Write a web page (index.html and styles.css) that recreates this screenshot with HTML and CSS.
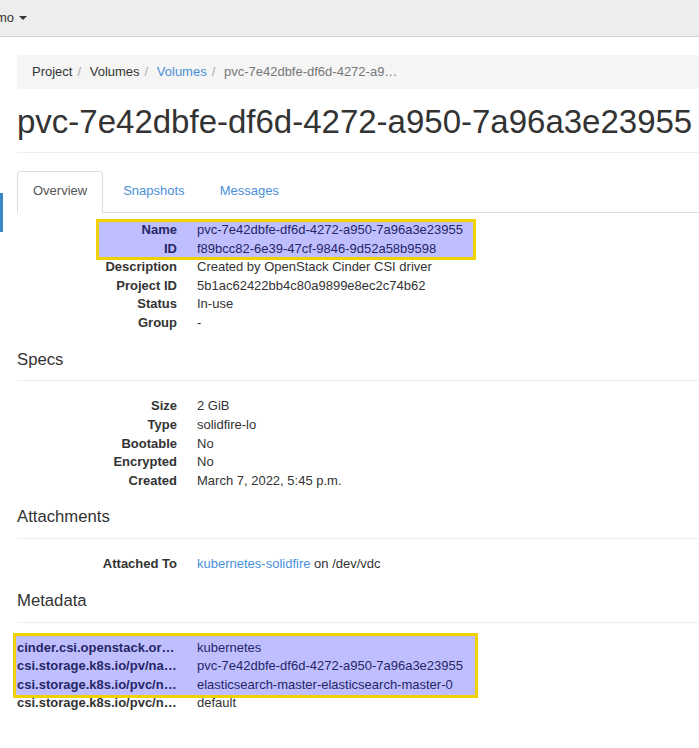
FILE: index.html
```html
<!DOCTYPE html>
<html lang="en">
<head>
<meta charset="utf-8">
<title>Volume Details</title>
<link rel="stylesheet" href="styles.css">
</head>
<body>
<header class="topbar">
  <span class="project">mo<span class="caret"></span></span>
</header>
<div class="layout">
  <aside class="sidebar"><span class="active-mark"></span></aside>
  <main class="main">
    <ol class="breadcrumb">
      <li>Project</li>
      <li>Volumes</li>
      <li><a href="#">Volumes</a></li>
      <li class="active">pvc-7e42dbfe-df6d-4272-a9…</li>
    </ol>
    <div class="page-header">
      <h1>pvc-7e42dbfe-df6d-4272-a950-7a96a3e23955</h1>
    </div>
    <ul class="nav-tabs">
      <li class="active"><a href="#">Overview</a></li>
      <li><a href="#">Snapshots</a></li>
      <li><a href="#">Messages</a></li>
    </ul>
    <div class="tab-content">
      <dl class="dl-horizontal overview">
        <dt>Name</dt><dd>pvc-7e42dbfe-df6d-4272-a950-7a96a3e23955</dd>
        <dt>ID</dt><dd>f89bcc82-6e39-47cf-9846-9d52a58b9598</dd>
        <dt>Description</dt><dd>Created by OpenStack Cinder CSI driver</dd>
        <dt>Project ID</dt><dd>5b1ac62422bb4c80a9899e8ec2c74b62</dd>
        <dt>Status</dt><dd>In-use</dd>
        <dt>Group</dt><dd>-</dd>
        <div class="hl hl-overview"></div>
      </dl>

      <h4>Specs</h4>
      <hr>
      <dl class="dl-horizontal">
        <dt>Size</dt><dd>2 GiB</dd>
        <dt>Type</dt><dd>solidfire-lo</dd>
        <dt>Bootable</dt><dd>No</dd>
        <dt>Encrypted</dt><dd>No</dd>
        <dt>Created</dt><dd>March 7, 2022, 5:45 p.m.</dd>
      </dl>

      <h4>Attachments</h4>
      <hr>
      <dl class="dl-horizontal">
        <dt>Attached To</dt><dd><a href="#">kubernetes-solidfire</a> on /dev/vdc</dd>
      </dl>

      <h4>Metadata</h4>
      <hr>
      <dl class="dl-horizontal metadata">
        <dt>cinder.csi.openstack.org/cluster</dt><dd>kubernetes</dd>
        <dt>csi.storage.k8s.io/pv/name</dt><dd>pvc-7e42dbfe-df6d-4272-a950-7a96a3e23955</dd>
        <dt>csi.storage.k8s.io/pvc/name</dt><dd>elasticsearch-master-elasticsearch-master-0</dd>
        <dt>csi.storage.k8s.io/pvc/namespace</dt><dd>default</dd>
        <div class="hl hl-metadata"></div>
      </dl>
    </div>
  </main>
</div>
</body>
</html>
```

FILE: styles.css
```css
html, body {
  margin: 0;
  padding: 0;
}
body {
  font-family: "Liberation Sans", Arial, Helvetica, sans-serif;
  font-size: 13px;
  line-height: 18.57px;
  color: #333;
  background: #fff;
  overflow: hidden;
  width: 699px;
  height: 748px;
}
a {
  color: #4a90d9;
  text-decoration: none;
}

/* top bar */
.topbar {
  height: 36px;
  background: #ededed;
  border-bottom: 1px solid #d3d3d3;
  display: flex;
  align-items: center;
}
.project {
  margin-left: -4px;
  display: inline-flex;
  align-items: center;
  color: #333;
  font-size: 13px;
}
.caret {
  display: inline-block;
  margin-left: 5px;
  width: 0;
  height: 0;
  border-top: 4px solid #333;
  border-left: 4px solid transparent;
  border-right: 4px solid transparent;
}

/* layout */
.layout {
  display: flex;
}
.sidebar {
  width: 3px;
  flex-shrink: 0;
}
.active-mark {
  display: block;
  margin-top: 156px;
  width: 3px;
  height: 39px;
  background: #3a87c8;
}
.main {
  margin-left: 14px;
  width: 820px;
  flex-shrink: 0;
}

/* breadcrumb */
.breadcrumb {
  margin: 18px 0 0;
  padding: 7.5px 15px 8px;
  list-style: none;
  background: #f5f5f5;
  border-radius: 4px;
  display: flex;
}
.breadcrumb li + li::before {
  content: "/\00a0";
  padding: 0 5px;
  color: #aaa;
}
.breadcrumb .active {
  color: #777;
}

/* page header */
.page-header {
  margin-top: 14px;
  padding-bottom: 12px;
  border-bottom: 1px solid #eee;
}
.page-header h1 {
  margin: 0;
  font-size: 33px;
  line-height: 37px;
  font-weight: 400;
  color: #333;
  white-space: nowrap;
}

/* tabs */
.nav-tabs {
  margin: 18px 0 0;
  padding: 0;
  list-style: none;
  display: flex;
  border-bottom: 1px solid #ddd;
}
.nav-tabs li {
  margin-right: 3px;
  margin-bottom: -1px;
}
.nav-tabs li:first-child {
  margin-right: 4px;
}
.nav-tabs a {
  display: block;
  padding: 10px 15px 11px;
  border: 1px solid transparent;
  border-radius: 4px 4px 0 0;
}
.nav-tabs .active a {
  color: #555;
  background: #fff;
  border-color: #ddd;
  border-bottom-color: #fff;
}

/* description lists */
.dl-horizontal {
  position: relative;
  display: grid;
  grid-template-columns: 160px 1fr;
  column-gap: 20px;
  margin: 16px 0 0;
  max-width: 680px;
}
.dl-horizontal dt {
  font-weight: 700;
  text-align: right;
  overflow: hidden;
  text-overflow: ellipsis;
  white-space: nowrap;
}
.dl-horizontal dd {
  margin: 0;
  white-space: nowrap;
}
.overview {
  margin-top: 8.5px;
}

h4 {
  margin: 18px 0 0;
  font-size: 16.7px;
  line-height: 18.4px;
  font-weight: 400;
  color: #333;
}
hr {
  margin: 11.5px 0 0;
  border: 0;
  border-top: 1px solid #eee;
  height: 0;
}

/* highlight overlays */
.hl {
  position: absolute;
  box-sizing: border-box;
  border: 3px solid #efd200;
  background: rgba(0, 0, 255, 0.25);
  z-index: 2;
  pointer-events: none;
}
.hl-overview {
  top: -2px;
  left: 79px;
  width: 380px;
  height: 41px;
}
.hl-metadata {
  top: -6px;
  left: -4px;
  width: 465px;
  height: 65px;
}
```
